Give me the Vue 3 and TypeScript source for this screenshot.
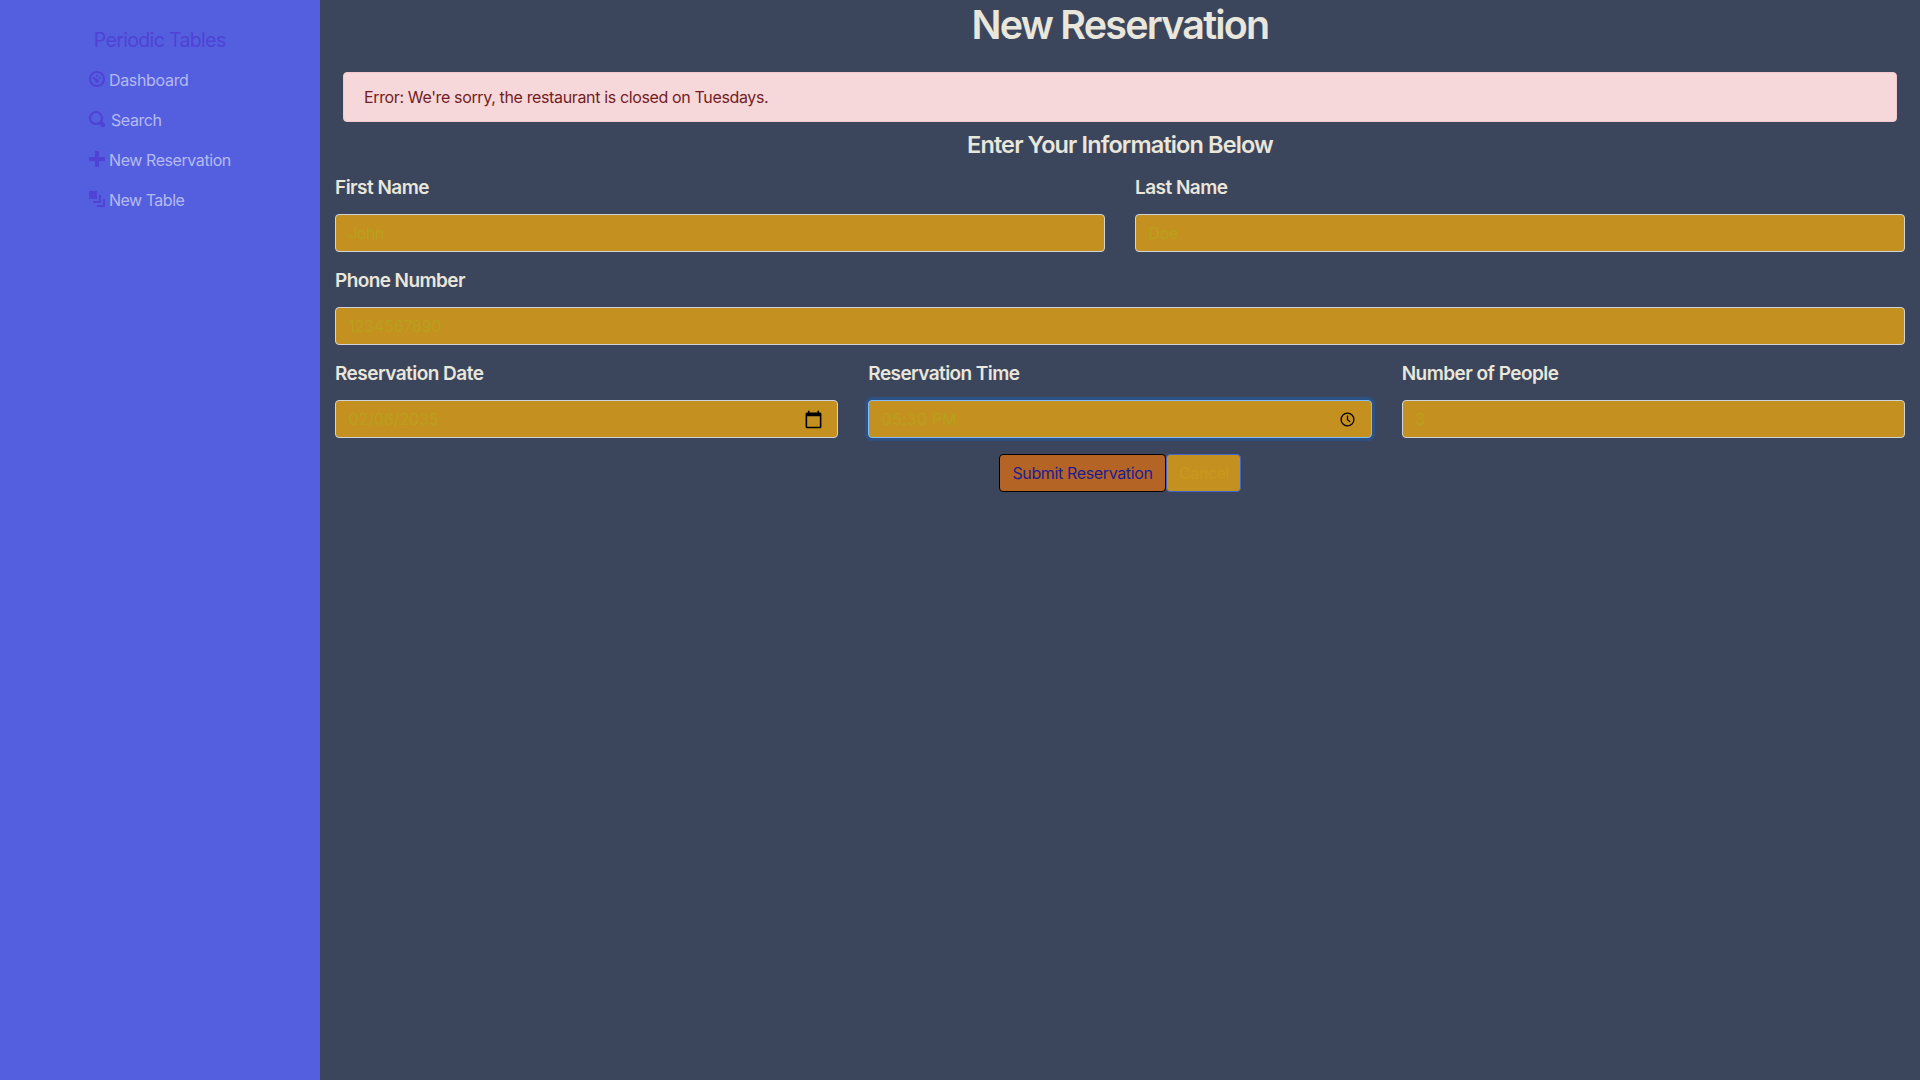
<script setup lang="ts">
interface NavItem { label: string; icon: string; cls: string }
interface Field { id: string; label: string; value: string; picker?: string; focused?: boolean }

const icons: Record<string, string> = {
  dashboard: 'M4 0c-2.200 0-4 1.800-4 4s1.800 4 4 4 4-1.800 4-4-1.800-4-4-4zm0 1c1.660 0 3 1.340 3 3s-1.340 3-3 3-3-1.340-3-3 1.340-3 3-3zm0 1c-.280 0-.500.220-.500.500s.220.500.500.500.500-.220.500-.500-.220-.500-.500-.500zm-1.660 1a.500.500 0 0 0-.190.840l.910.910c-.020.080-.060.160-.060.250 0 .550.450 1 1 1s1-.450 1-1-.450-1-1-1c-.090 0-.170.040-.250.060l-.910-.910a.500.500 0 0 0-.440-.160.500.500 0 0 0-.060 0zm3.160 0c-.280 0-.500.220-.500.500s.220.500.500.500.500-.220.500-.500-.220-.500-.500-.500z',
  search: 'M3.500 0a3.500 3.500 0 1 0 1.660 6.580l1.120 1.140a1.020 1.020 0 1 0 1.440-1.440l-1.140-1.120a3.500 3.500 0 0 0-3.080-5.160zm0 1a2.500 2.500 0 1 1 0 5a2.500 2.500 0 0 1 0-5z',
  plus: 'M3 0v3h-3v2h3v3h2v-3h3v-2h-3v-3h-2z',
  layers: 'M0 0v4h4v-4h-4zm5 2v3h-3v1h4v-4h-1zm2 2v3h-3v1h4v-4h-1z',
}
const nav: NavItem[] = [
  { label: 'Dashboard', icon: 'dashboard', cls: 'nav-dashboard' },
  { label: 'Search', icon: 'search', cls: 'nav-search' },
  { label: 'New Reservation', icon: 'plus', cls: 'nav-reservation' },
  { label: 'New Table', icon: 'layers', cls: 'nav-table' },
]
const rows: Field[][] = [
  [
    { id: 'first-name', label: 'First Name', value: 'John' },
    { id: 'last-name', label: 'Last Name', value: 'Doe' },
  ],
  [{ id: 'phone', label: 'Phone Number', value: '1234567890' }],
  [
    { id: 'date', label: 'Reservation Date', value: '02/06/2035', picker: 'calendar' },
    { id: 'time', label: 'Reservation Time', value: '05:30 PM', picker: 'clock', focused: true },
    { id: 'people', label: 'Number of People', value: '3' },
  ],
]
</script>

<template>
  <div class="layout">
    <nav class="sidebar">
      <a class="brand">Periodic Tables</a>
      <ul class="menu">
        <li v-for="item in nav" :key="item.label" :class="item.cls">
          <svg class="nav-icon" viewBox="0 0 8 8" width="16" height="16"><path :d="icons[item.icon]" /></svg>
          <span>{{ item.label }}</span>
        </li>
      </ul>
    </nav>
    <main class="content">
      <h1>New Reservation</h1>
      <div class="alert">Error: We're sorry, the restaurant is closed on Tuesdays.</div>
      <h4>Enter Your Information Below</h4>
      <form>
        <div v-for="(row, i) in rows" :key="i" class="row">
          <div v-for="f in row" :key="f.id" class="group" :class="f.id">
            <div class="label">{{ f.label }}</div>
            <div class="control" :class="{ focused: f.focused }">
              <span class="value">{{ f.value }}</span>
              <svg v-if="f.picker === 'calendar'" class="calendar" viewBox="0 0 24 24" width="19" height="19"><path d="M20 3h-1V1h-2v2H7V1H5v2H4c-1.100 0-2 .900-2 2v16c0 1.100.900 2 2 2h16c1.100 0 2-.900 2-2V5c0-1.100-.900-2-2-2zm0 18H4V8h16v13z" /></svg>
              <svg v-if="f.picker === 'clock'" class="clock" viewBox="0 0 15 15" width="15" height="15"><circle cx="7.500" cy="7.500" r="6.400" /><path d="M7.500 3.500v4.300l2.600 2" /></svg>
            </div>
          </div>
        </div>
        <div class="actions">
          <button type="button" class="submit">Submit Reservation</button>
          <button type="button" class="cancel">Cancel</button>
        </div>
      </form>
    </main>
  </div>
</template>

<style>
body { margin: 0; }
</style>
<style scoped>
* { box-sizing: border-box; }
.layout { display: flex; height: 1080px; overflow: hidden; background: #3b455c; color: #e9e6db; font: 400 16px/24px Inter, sans-serif; letter-spacing: -0.36px; white-space: nowrap; }
.sidebar { flex: none; width: 320px; background: #545fdf; padding: 24px 0 0 89px; }
.brand { display: block; height: 32px; padding-left: 4.7px; line-height: 32px; font-size: 19.5px; letter-spacing: -0.64px; color: #4f42d5; }
.menu { list-style: none; margin: 4px 0 0; padding: 0; }
.menu li { display: flex; align-items: center; height: 40px; gap: 4px; color: #b4baf0; }
.menu .nav-dashboard { letter-spacing: -0.33px; }
.menu .nav-search { gap: 6px; letter-spacing: -0.42px; }
.menu .nav-reservation { letter-spacing: -0.42px; }
.menu .nav-table { letter-spacing: -0.5px; }
.nav-icon { flex: none; fill: #4f42d5; position: relative; top: -1px; }
.content { flex: 1; padding: 0 15px; }
h1 { margin: 0; font-size: 39.5px; line-height: 50px; height: 48px; font-weight: 600; letter-spacing: -1.8px; text-align: center; }
.alert { margin: 24px 8px 0; height: 50px; padding: 12px 20px; border: 1px solid #f5c6cb; border-radius: 4px; background: #f7d8da; color: #721c24; }
h4 { margin: 8px 0 0; font-size: 23.5px; line-height: 29px; font-weight: 600; letter-spacing: -0.88px; text-align: center; }
form { padding-top: 16px; }
.row { display: flex; gap: 30px; margin-bottom: 16px; }
.group { flex: 1 1 0; }
.label { height: 31px; line-height: 26px; margin-bottom: 8px; font-size: 19px; font-weight: 600; letter-spacing: -0.53px; }
.phone .label, .time .label { letter-spacing: -0.58px; }
.control { display: flex; align-items: center; justify-content: space-between; height: 38px; padding: 0 13px 0 12.5px; border: 1px solid #ced4da; border-radius: 4px; background: #c49020; color: #b8a01a; }
.first-name .value { letter-spacing: -0.6px; }
.phone .value { letter-spacing: -0.2px; }
.date .value { letter-spacing: -0.06px; }
.time .value { letter-spacing: 0.2px; }
.focused { border-color: #80bdff; box-shadow: 0 0 0 3px rgba(0, 123, 255, 0.25); }
.calendar { margin-right: 1.7px; }
.clock { margin-right: 3px; fill: none; stroke: #000; stroke-width: 1.3; }
.actions { display: flex; justify-content: center; }
button { height: 38px; width: 167px; padding: 0 12px; border: 1px solid #000; border-radius: 4px; font: inherit; letter-spacing: -0.36px; background: #b46424; color: #1d1d96; }
.cancel { width: 75px; border-color: #3f66cc; background: #c49020; color: #c9981c; letter-spacing: -0.44px; }
</style>
